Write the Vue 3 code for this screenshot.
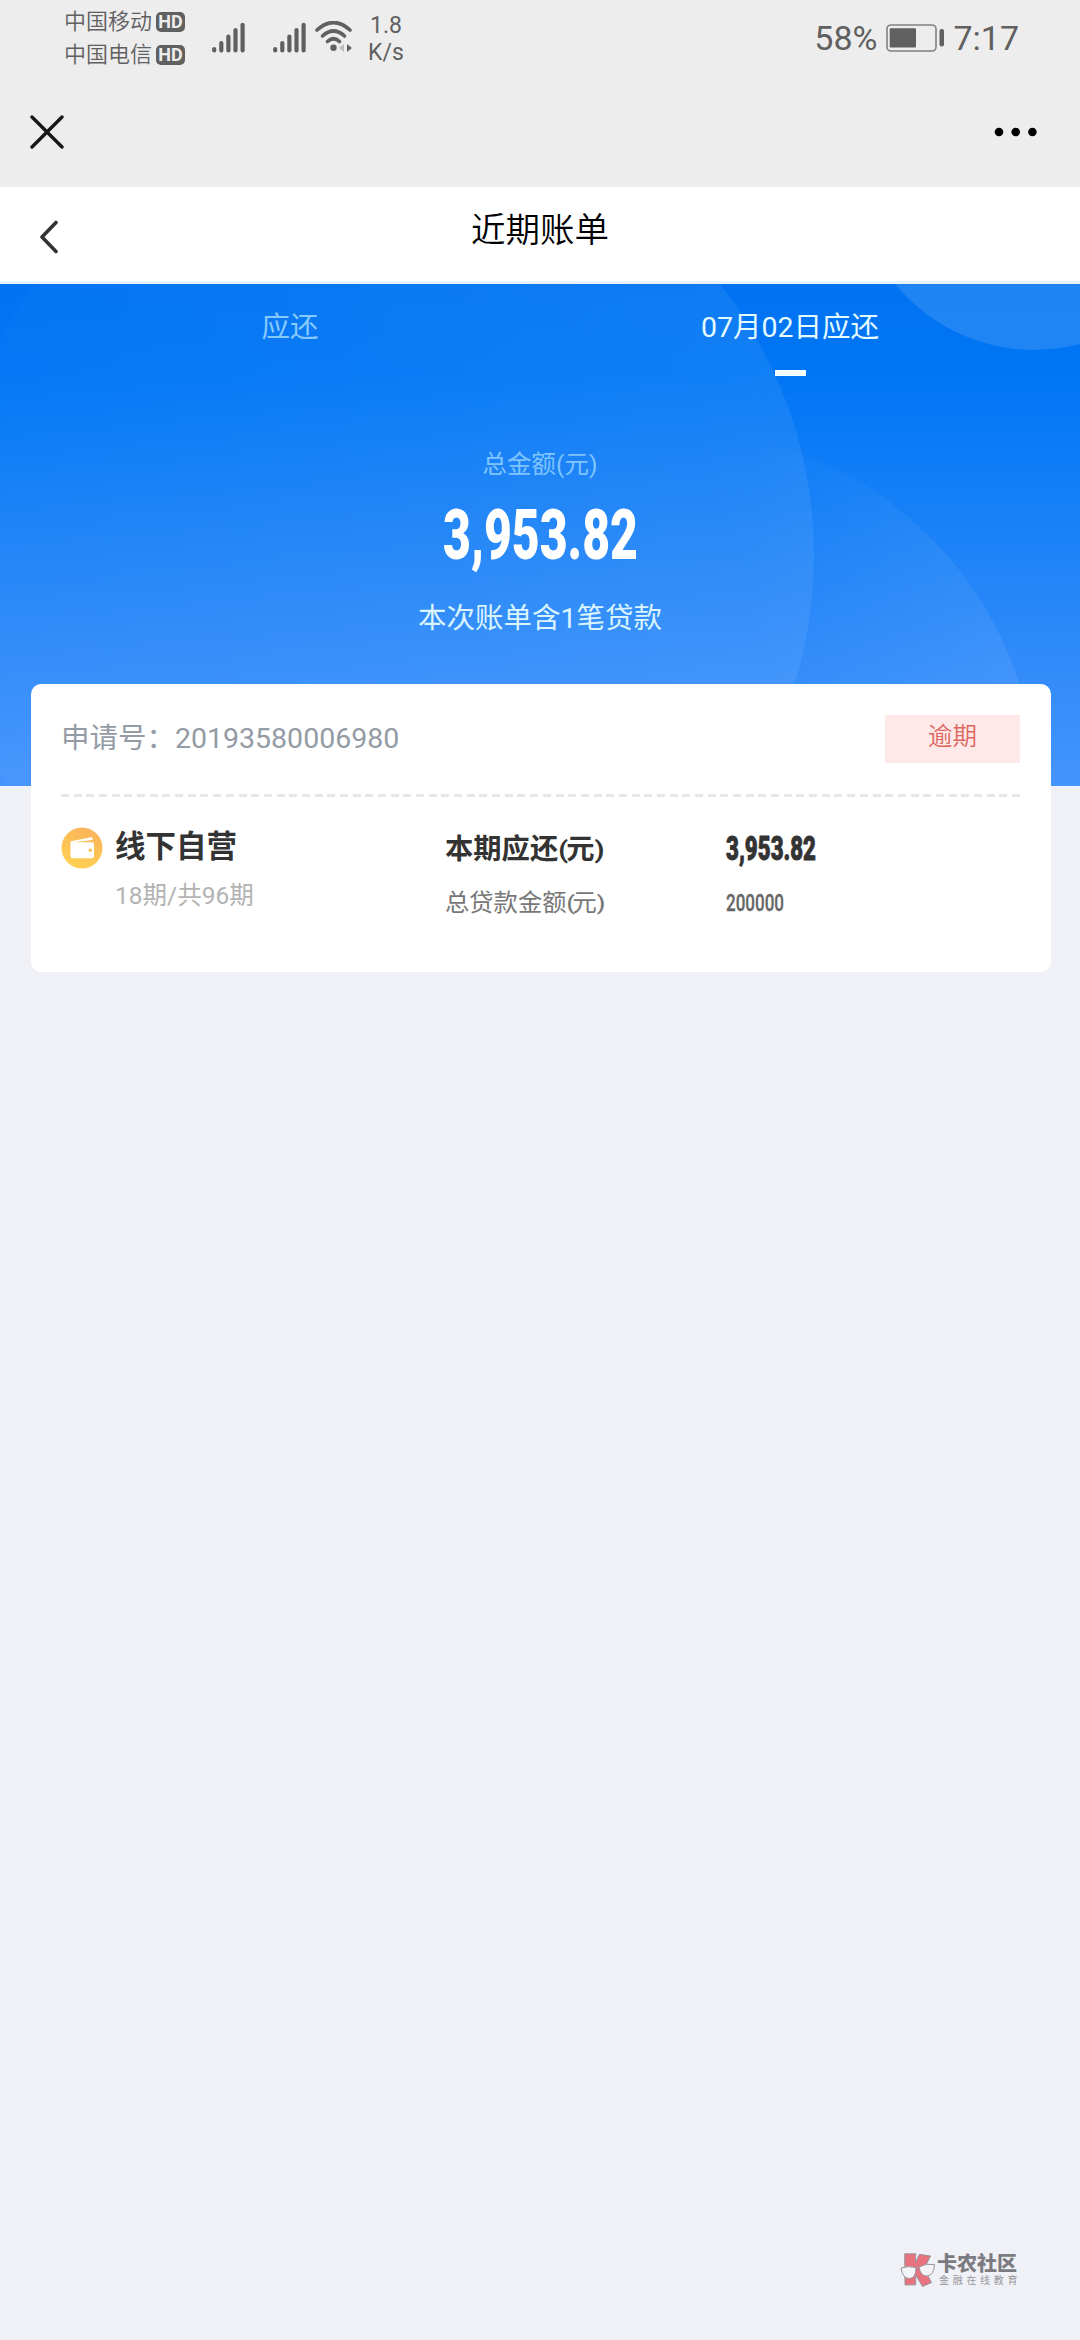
<template>
  <div class="page">
    <header class="status">
      <div class="carriers">
        <div v-for="name in carriers" :key="name" class="carrier">
          <span>{{ name }}</span>
          <span class="hd">HD</span>
        </div>
      </div>
      <svg v-for="n in 2" :key="n" class="signal" viewBox="0 0 34 32">
        <path d="M2.2 28v1.500M9.300 22v7.500M16.400 15.500v14M23.500 9v20.500M30.600 3.800v25.700" />
      </svg>
      <svg class="wifi" viewBox="0 0 38 32">
        <path d="M2 9Q18.500 -6 35 9M7.500 15Q18.500 5 29.500 15M12.500 20.500Q18.500 15 24.500 20.500" />
        <circle cx="18.500" cy="26.700" r="3.200" />
        <path class="down" d="M29 23v8l-5-4z" />
        <path class="up" d="M32 23v8l5-4z" />
      </svg>
      <div class="speed">
        <span>1.8</span>
        <span>K/s</span>
      </div>
      <div class="power">
        <span>58%</span>
        <svg class="battery" viewBox="0 0 60 28">
          <rect class="shell" x="1" y="1" width="49" height="26" rx="4" />
          <rect x="3.700" y="4.200" width="26.300" height="19.300" rx="1" />
          <rect x="53.500" y="5" width="4.500" height="17.500" rx="2" />
        </svg>
        <span>7:17</span>
      </div>
    </header>

    <nav class="webbar">
      <svg class="close" viewBox="0 0 34 34"><path d="M2 2L32 32M32 2L2 32" /></svg>
      <svg class="more" viewBox="0 0 44 10">
        <circle cx="5" cy="5" r="4.300" />
        <circle cx="21.700" cy="5" r="4.300" />
        <circle cx="38.400" cy="5" r="4.300" />
      </svg>
    </nav>

    <div class="titlebar">
      <svg class="back" viewBox="0 0 20 34"><path d="M17 2.500L3 17L17 31.500" /></svg>
      <h1>近期账单</h1>
    </div>

    <section class="hero">
      <svg class="hero-bg" viewBox="0 0 1080 502">
        <defs>
          <linearGradient id="big" x1="0" y1="0" x2="1" y2="0.3">
            <stop offset="0" stop-color="#fff" stop-opacity="0.01" />
            <stop offset="1" stop-color="#fff" stop-opacity="0.07" />
          </linearGradient>
          <linearGradient id="side" x1="0" y1="0" x2="1" y2="0">
            <stop offset="0.600" stop-color="#fff" stop-opacity="0" />
            <stop offset="1" stop-color="#fff" stop-opacity="0.080" />
          </linearGradient>
        </defs>
        <circle cx="378" cy="271" r="436" fill="url(#big)" />
        <circle cx="674" cy="509" r="362" fill="url(#side)" />
        <circle cx="1034" cy="-113" r="179" fill="#fff" fill-opacity="0.120" />
      </svg>
      <div class="tabs">
        <div
          v-for="(tab, index) in tabs"
          :key="index"
          class="tab"
          :class="{ active: current === index }"
          @click="current = index"
        >
          {{ tab }}
        </div>
      </div>
      <div class="summary">
        <p class="label">总金额(元)</p>
        <svg class="total" viewBox="0 0 220 90">
          <text x="13" y="70" textLength="195" lengthAdjust="spacingAndGlyphs">{{ bill.due }}</text>
        </svg>
        <p class="count">本次账单含1笔贷款</p>
      </div>
    </section>

    <section class="card">
      <div class="card-head">
        <span class="no">申请号：{{ bill.no }}</span>
        <span class="badge">逾期</span>
      </div>
      <div class="line"></div>
      <div class="card-body">
        <svg class="wallet" viewBox="0 0 42 42">
          <defs>
            <linearGradient id="coin" x1="0.700" y1="0" x2="0.300" y2="1">
              <stop offset="0" stop-color="#fbb25b" />
              <stop offset="1" stop-color="#ffd250" />
            </linearGradient>
          </defs>
          <circle cx="21" cy="21" r="20.500" fill="url(#coin)" />
          <path d="M10 14.300L30.500 10.200Q31.500 10.100 31.500 11V13L13 15.200H31Q33 15.200 33 17.200V29.300Q33 31.300 31 31.300H11.500Q9.500 31.300 9.500 29.300V15.500Q9.500 14.500 10 14.300Z" fill="#fff" />
          <circle cx="29.300" cy="23.200" r="1.700" fill="#fcc057" />
        </svg>
        <div class="product">
          <h2>线下自营</h2>
          <p>{{ bill.period }}</p>
        </div>
        <div class="names">
          <p class="strong">本期应还<i>(</i>元<i>)</i></p>
          <p class="weak">总贷款金额<i>(</i>元<i>)</i></p>
        </div>
        <svg class="values" viewBox="0 0 110 100">
          <text class="v1" x="2" y="36" textLength="90" lengthAdjust="spacingAndGlyphs">{{ bill.due }}</text>
          <text class="v2" x="2" y="87" textLength="58" lengthAdjust="spacingAndGlyphs">{{ bill.loan }}</text>
        </svg>
      </div>
    </section>

    <footer class="brand">
      <svg class="brand-logo" viewBox="0 0 36 38">
        <path class="k" d="M4.700 0.800H15.700L15.500 9.500L19.500 1.300L30.500 3L24 16L31.500 29.500L22.500 33.500L15.700 22V31.800L5 32Z" />
        <path class="glass" d="M1 15Q8 12.500 16 14.500Q16 25 9.500 25.500Q2.500 25.500 1 15ZM19 14Q26 10 34.500 11.500Q34 22 27.500 23Q20.500 23.500 19 14Z" />
        <path class="bridge" d="M16 15Q17.500 13.500 19 14.500" />
      </svg>
      <div class="brand-text">
        <strong>卡农社区</strong>
        <span>金融在线教育</span>
      </div>
    </footer>
  </div>
</template>

<script setup>
import { ref, reactive } from 'vue'

const carriers = ['中国移动', '中国电信']

const tabs = ['应还', '07月02日应还']
const current = ref(1)

// 账单数据
const bill = reactive({
  no: '20193580006980',
  due: '3,953.82',
  loan: '200000',
  period: '18期/共96期'
})
</script>

<style>
body {
  background: #f0f1f6;
}
</style>

<style scoped>
.page {
  display: flex;
  flex-direction: column;
  width: 1080px;
  height: 2340px;
  overflow: hidden;
  background: #f0f1f6;
  font-family: Roboto, "Noto Sans CJK SC", sans-serif;
}
h1, h2, p {
  margin: 0;
}
svg {
  display: block;
  flex: none;
}

/* 状态栏 */
.status {
  display: flex;
  align-items: flex-start;
  height: 76px;
  padding-left: 64px;
  background: #ededed;
  color: #606060;
}
.carriers {
  width: 148px;
  padding-top: 5px;
  font-weight: 350;
}
.carrier {
  display: flex;
  align-items: center;
  gap: 4px;
  height: 33px;
  font-size: 22px;
  line-height: 33px;
}
.hd {
  width: 29px;
  height: 20px;
  border-radius: 5px;
  background: #606060;
  color: #ededed;
  font-size: 18px;
  font-weight: 700;
  line-height: 20px;
  text-align: center;
}
.signal {
  width: 34px;
  height: 32px;
  margin-top: 21px;
  margin-right: 27px;
  fill: none;
  stroke: #606060;
  stroke-width: 4.2;
  stroke-linecap: round;
}
.wifi {
  width: 38px;
  height: 32px;
  margin-top: 21px;
  margin-left: -19px;
  fill: #606060;
}
.wifi path:first-child {
  fill: none;
  stroke: #606060;
  stroke-width: 3.6;
  stroke-linecap: round;
}
.wifi .down {
  fill: #bbb;
}
.speed {
  display: flex;
  flex-direction: column;
  width: 40px;
  margin-left: 13px;
  padding-top: 12px;
  font-size: 23px;
  line-height: 27px;
  text-align: center;
}
.power {
  display: flex;
  align-items: center;
  margin-left: auto;
  padding-right: 61px;
  padding-top: 17px;
  font-size: 34px;
  line-height: 42px;
}
.battery {
  width: 60px;
  height: 28px;
  margin: 0 7px 0 9px;
  fill: #606060;
}
.battery .shell {
  fill: none;
  stroke: #808080;
  stroke-width: 1.6;
}

.webbar {
  display: flex;
  align-items: center;
  justify-content: space-between;
  height: 111px;
  padding: 0 42px 0 30px;
  background: #ededed;
}
.close {
  width: 34px;
  height: 34px;
  stroke: #181818;
  stroke-width: 3.4;
  stroke-linecap: round;
}
.more {
  width: 44px;
  height: 10px;
}

.titlebar {
  display: grid;
  grid-template-columns: 120px 1fr 120px;
  height: 94px;
  border-bottom: 3px solid #e6f3f8;
  background: #fff;
}
.back {
  width: 20px;
  height: 34px;
  margin: 33px 0 0 39px;
  fill: none;
  stroke: #333;
  stroke-width: 3.6;
  stroke-linecap: round;
  stroke-linejoin: round;
}
.titlebar h1 {
  font-size: 34.5px;
  font-weight: 350;
  line-height: 87px;
  text-align: center;
  color: #000;
}

/* 蓝色头部 */
.hero {
  position: relative;
  flex: none;
  height: 502px;
  background: linear-gradient(#0073f2, #0076f5 18%, #4594fc);
}
.hero-bg {
  position: absolute;
  inset: 0;
  width: 1080px;
  height: 502px;
}
.tabs {
  position: relative;
  display: flex;
  padding: 0 40px;
}
.tab {
  flex: 1;
  height: 92px;
  font-size: 28.5px;
  line-height: 88px;
  text-align: center;
  color: #86c9ff;
}
.tab.active {
  color: #e4fbff;
}
.tab.active::after {
  content: "";
  display: block;
  width: 31px;
  height: 6px;
  margin: -2px auto 0;
  background: #f4feff;
}
.summary {
  position: relative;
  display: flex;
  flex-direction: column;
  align-items: center;
}
.label {
  margin-top: 69px;
  font-size: 24.5px;
  line-height: 40px;
  color: #80c4ff;
}
.total {
  width: 220px;
  height: 90px;
  margin-top: 4px;
}
.total text {
  font-size: 71px;
  font-weight: 900;
  fill: #fff;
}
.count {
  margin-top: 20px;
  font-size: 28.5px;
  line-height: 40px;
  color: #daf4ff;
}

/* 账单卡片 */
.card {
  position: relative;
  flex: none;
  height: 288px;
  box-sizing: border-box;
  margin: -102px 29px 0 31px;
  padding: 31px 31px 0 30px;
  border-radius: 10px;
  background: #fff;
}
.card-head {
  display: flex;
  justify-content: space-between;
  height: 79px;
}
.no {
  font-size: 28.5px;
  line-height: 47px;
  color: #939ba5;
}
.badge {
  width: 135px;
  height: 48px;
  background: #ffe9e8;
  color: #dc6761;
  font-size: 24.5px;
  font-weight: 350;
  line-height: 44px;
  text-align: center;
}
.line {
  height: 3px;
  background: repeating-linear-gradient(90deg, #e7e7e7 0 8px, transparent 8px 12.68px);
}
.card-body {
  display: flex;
  align-items: flex-start;
}
.wallet {
  width: 42px;
  height: 42px;
  margin-top: 30px;
}
.product {
  width: 330px;
  margin-left: 12px;
}
.product h2 {
  margin-top: 29px;
  font-size: 30.5px;
  font-weight: 700;
  line-height: 42px;
  color: #333;
}
.product p {
  margin-top: 8px;
  font-size: 24.5px;
  line-height: 40px;
  color: #b3b3b3;
}
.names {
  width: 279px;
}
.names i {
  display: inline-block;
  font-style: normal;
  transform: scaleY(0.850);
}
.strong {
  margin-top: 33px;
  font-size: 28.3px;
  font-weight: 700;
  line-height: 40px;
  color: #333;
}
.weak {
  margin-top: 13px;
  font-size: 24.3px;
  line-height: 40px;
  color: #777;
}
.strong i {
  width: 8px;
}
.weak i {
  width: 6px;
  font-weight: 500;
}
.values {
  width: 110px;
  height: 100px;
  margin-top: 27px;
}
.v1 {
  font-size: 34px;
  font-weight: 900;
  fill: #333;
  stroke: #333;
  stroke-width: 0.9;
}
.v2 {
  font-size: 24px;
  font-weight: 500;
  fill: #666;
  stroke: #666;
  stroke-width: 0.3;
}

/* 底部水印 */
.brand {
  display: flex;
  margin-top: auto;
  padding: 0 60px 49px 900px;
}
.brand-logo {
  width: 36px;
  height: 38px;
}
.brand-logo .k {
  fill: #e8737f;
  stroke: #96969b;
  stroke-width: 1;
}
.brand-logo .glass {
  fill: #f4f5f9;
  stroke: #96969b;
  stroke-width: 1;
}
.brand-logo .bridge {
  fill: none;
  stroke: #96969b;
}
.brand-text {
  display: flex;
  flex-direction: column;
  margin-left: 1px;
  color: #7b7b81;
  white-space: nowrap;
}
.brand-text strong {
  font-size: 20px;
  font-weight: 900;
  line-height: 22px;
}
.brand-text span {
  margin-left: 2px;
  font-size: 10px;
  line-height: 12px;
  letter-spacing: 3.7px;
  color: #96969c;
}
</style>
